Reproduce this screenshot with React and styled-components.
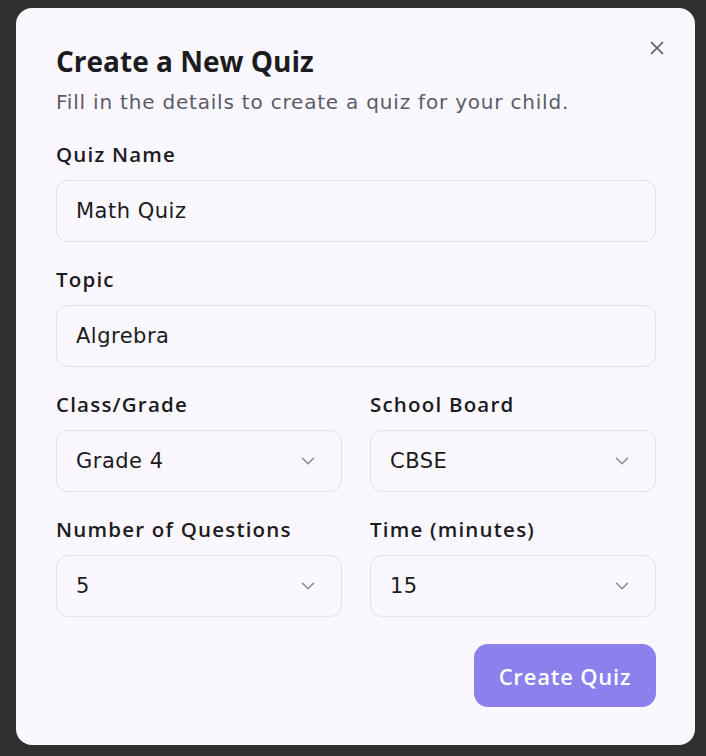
import styled, { createGlobalStyle } from "styled-components";

const GlobalStyle = createGlobalStyle`
  html, body {
    margin: 0;
    padding: 0;
    background: #303030;
    font-family: "DejaVu Sans", "Open Sans", sans-serif;
  }
  * { box-sizing: border-box; }
`;

const fields = [
  [{ label: "Class/Grade", value: "Grade 4" }, { label: "School Board", value: "CBSE" }],
  [{ label: "Number of Questions", value: "5" }, { label: "Time (minutes)", value: "15" }],
];

const Chevron = () => (
  <svg width="22" height="22" viewBox="0 0 24 24" fill="none" stroke="#8a8891" strokeWidth="1.6" strokeLinecap="round" strokeLinejoin="round">
    <path d="m6 9 6 6 6-6" />
  </svg>
);

const CloseIcon = () => (
  <svg width="22" height="22" viewBox="0 0 24 24" fill="none" stroke="#55535c" strokeWidth="1.8" strokeLinecap="round">
    <path d="M18 6 6 18M6 6l12 12" />
  </svg>
);

const App = () => {
  return (
    <Page>
      <GlobalStyle />
      <Modal>
        <CloseButton>
          <CloseIcon />
        </CloseButton>
        <Title>Create a New Quiz</Title>
        <Subtitle>Fill in the details to create a quiz for your child.</Subtitle>
        <Form>
          <Field>
            <Label>Quiz Name</Label>
            <Input>Math Quiz</Input>
          </Field>
          <Field>
            <Label>Topic</Label>
            <Input>Algrebra</Input>
          </Field>
          {fields.map((row, i) => (
            <Row key={i}>
              {row.map((f) => (
                <Field key={f.label}>
                  <Label>{f.label}</Label>
                  <Input>
                    {f.value}
                    <Chevron />
                  </Input>
                </Field>
              ))}
            </Row>
          ))}
        </Form>
        <Footer>
          <Button>Create Quiz</Button>
        </Footer>
      </Modal>
    </Page>
  );
};

export default App;

const Page = styled.div`
  width: 706px;
  height: 756px;
  padding: 8px 11px 11px 16px;
`;

const Modal = styled.div`
  position: relative;
  width: 679px;
  height: 737px;
  background: #faf8fe;
  border-radius: 16px;
  padding: 36px 39px 39px 40px;
  color: #1c1b20;
`;

const CloseButton = styled.div`
  position: absolute;
  top: 29px;
  right: 27px;
  display: flex;
`;

const Title = styled.h2`
  margin: 0;
  font-family: "Open Sans", sans-serif;
  font-size: 28px;
  line-height: 34px;
  font-weight: 700;
`;

const Subtitle = styled.p`
  margin: 10px 0 0;
  font-size: 20px;
  line-height: 28px;
  letter-spacing: 0.8px;
  color: #5d5b68;
`;

const Form = styled.div`
  margin-top: 24px;
  display: flex;
  flex-direction: column;
  gap: 23px;
`;

const Row = styled.div`
  display: grid;
  grid-template-columns: 1fr 1fr;
  gap: 28px;
`;

const Field = styled.div`
  display: flex;
  flex-direction: column;
  gap: 12px;
`;

const Label = styled.div`
  font-family: "Open Sans", sans-serif;
  font-size: 20.5px;
  line-height: 28px;
  font-weight: 600;
  letter-spacing: 1.2px;
`;

const Input = styled.div`
  height: 62px;
  border: 1px solid #e3e1e9;
  border-radius: 12px;
  padding: 0 22px 0 19px;
  display: flex;
  align-items: center;
  justify-content: space-between;
  font-size: 21px;
  letter-spacing: 0.5px;
  color: #1c1b20;
`;

const Footer = styled.div`
  margin-top: 27px;
  display: flex;
  justify-content: flex-end;
`;

const Button = styled.button`
  width: 182px;
  height: 63px;
  border: none;
  border-radius: 14px;
  background: #8b80ec;
  color: #ffffff;
  font-family: "Open Sans", sans-serif;
  font-size: 22px;
  font-weight: 600;
  letter-spacing: 0.8px;
`;
